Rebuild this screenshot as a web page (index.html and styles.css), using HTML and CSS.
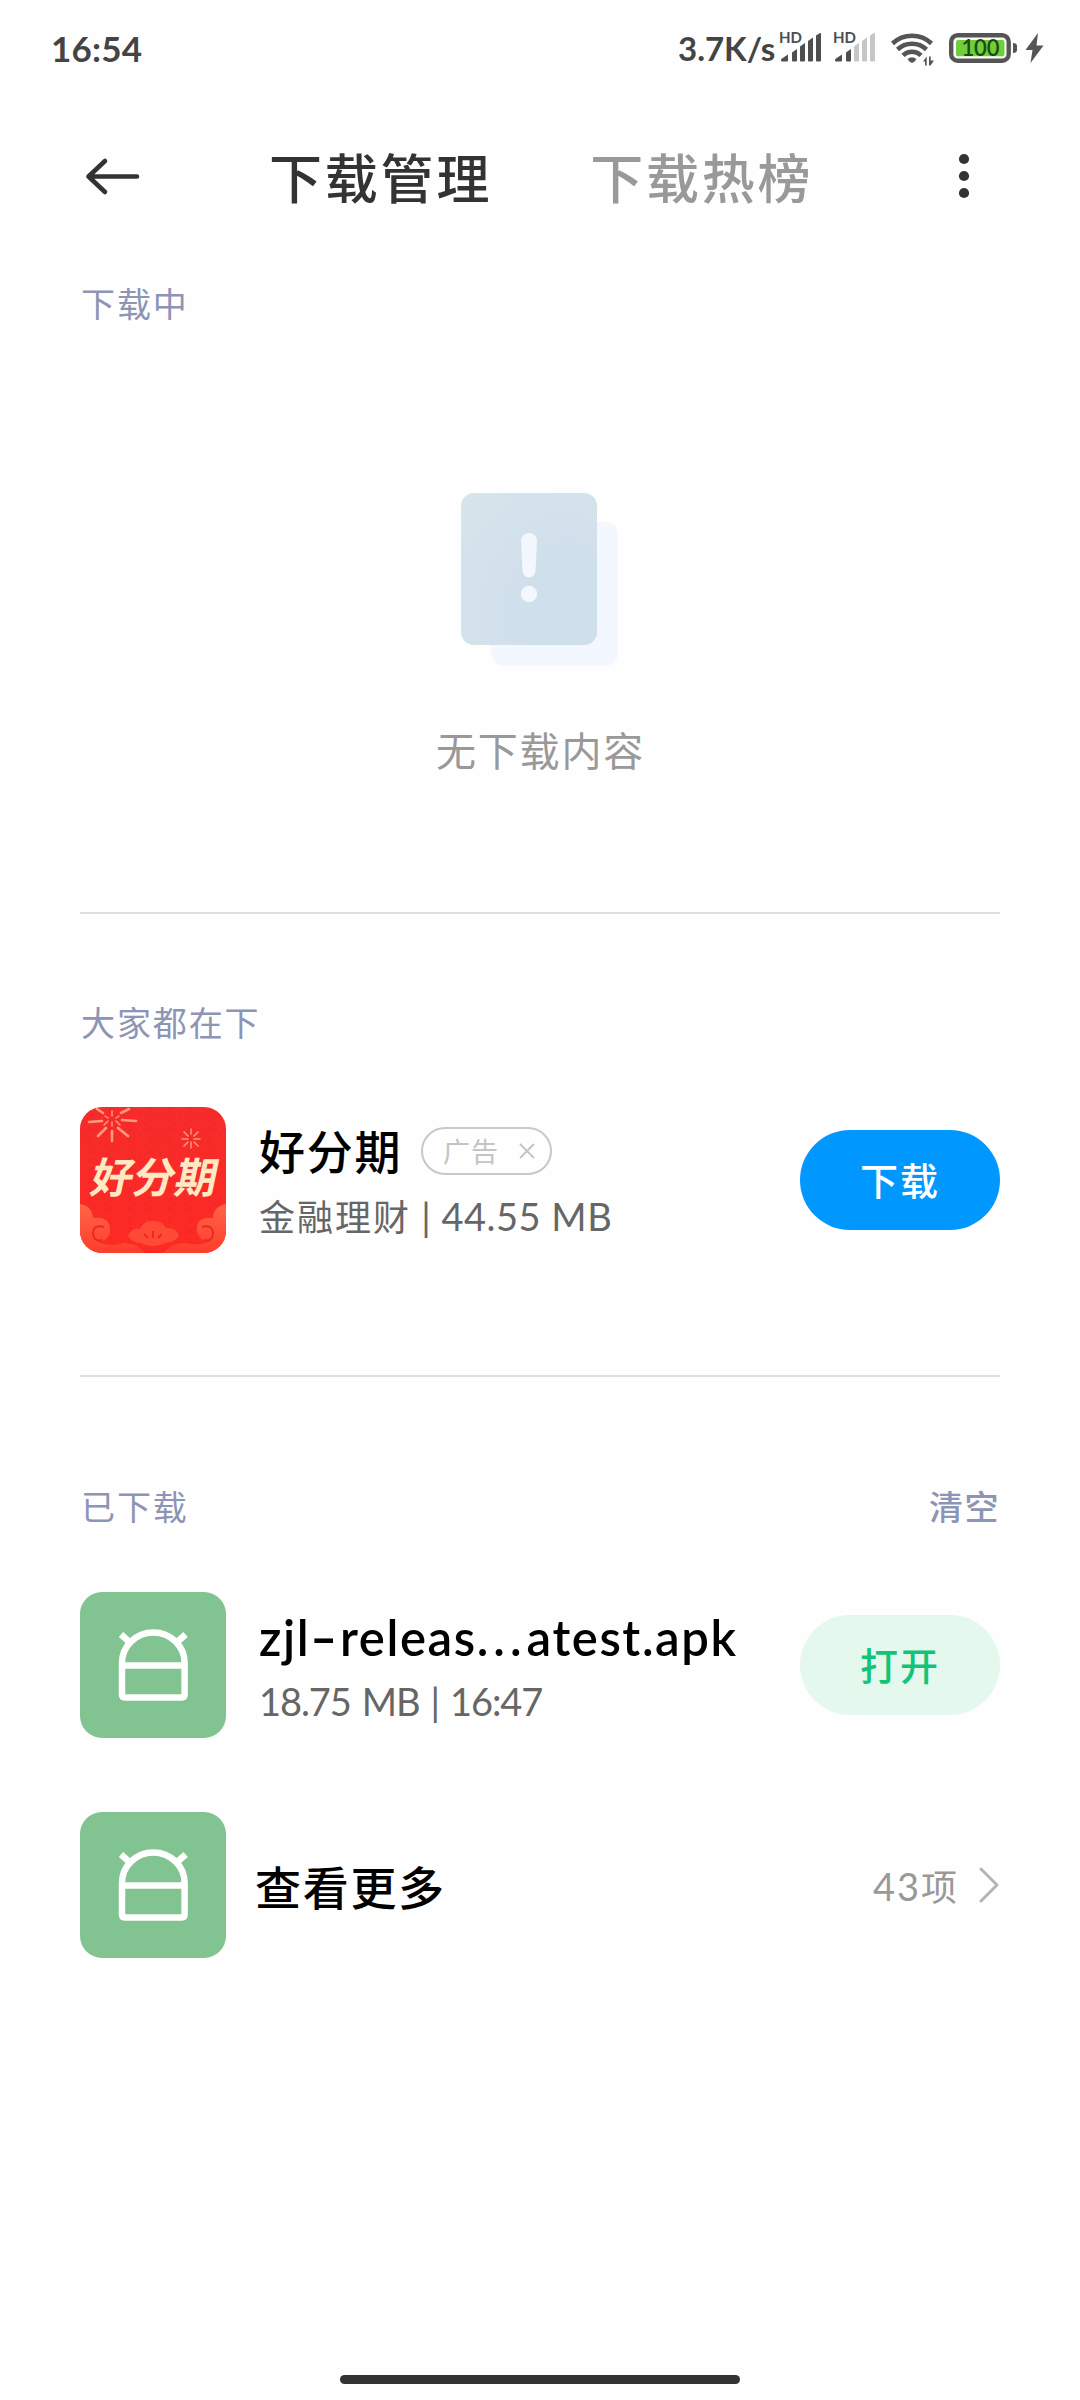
FILE: index.html
```html
<!DOCTYPE html>
<html lang="zh-CN">
<head>
<meta charset="utf-8">
<title>下载管理</title>
<link rel="stylesheet" href="styles.css">
</head>
<body>
<svg class="defs" aria-hidden="true">
  <symbol id="android" viewBox="0 0 146 146">
    <g fill="none" stroke="#fff" stroke-width="6.500" stroke-linejoin="round">
      <path d="M42 71a31.300 30.500 0 0 1 62.600 0V102.500q0 3-3 3H45q-3 0-3-3Z"/>
      <path d="M42 73.500H104.600M41 42.500l9 8M105.600 42.500l-9 8"/>
    </g>
  </symbol>
</svg>
<main class="screen">
  <header class="status">
    <span class="clock">16:54</span>
    <span class="speed">3.7K/s</span>
    <svg class="indicators" width="270" height="40" viewBox="776 28 270 40">
      <g fill="#4e4e4e">
        <text x="779" y="43" class="hd" textLength="23" lengthAdjust="spacingAndGlyphs">HD</text>
        <text x="833" y="43" class="hd" textLength="23" lengthAdjust="spacingAndGlyphs">HD</text>
        <path id="b1" d="M781 60q0-1 1-1.500l6-4V60.500q0 1-1 1h-5q-1 0-1-1Z"/>
        <path id="b2" d="M792 52.500l5-3.500v11.500q0 1-1 1h-3q-1 0-1-1Z"/>
        <path d="M800 46.500l5-3.500v17.500q0 1-1 1h-3q-1 0-1-1ZM808 41l5-3.500v23q0 1-1 1h-3q-1 0-1-1ZM816 35.500l4-2.500q1 0 1 1v26.500q0 1-1 1h-3q-1 0-1-1Z"/>
        <use href="#b1" x="54"/><use href="#b2" x="54"/>
      </g>
      <path fill="#c6c6c6" d="M854 46.500l5-3.500v17.500q0 1-1 1h-3q-1 0-1-1ZM862 41l5-3.500v23q0 1-1 1h-3q-1 0-1-1ZM870 35.500l4-2.500q1 0 1 1v26.500q0 1-1 1h-3q-1 0-1-1Z"/>
      <g fill="none" stroke="#555" stroke-width="4.600">
        <path d="M892.500 43.500a28.500 28.500 0 0 1 39 0M897.500 49.500a21 21 0 0 1 29 0M903 55.300a13 13 0 0 1 18 0"/>
      </g>
      <path fill="#555" d="M907.500 59.300q4.500-4 9 0l-2.500 2.700q-2 1.500-4 0Z"/>
      <path fill="#555" d="M923 61.500l3.700-5v9h-1.700v-4ZM929 56.500h1.700v4h3.300l-3.500 5h-1.500Z"/>
      <rect x="951.200" y="35.200" width="57.500" height="25.500" rx="6.500" fill="none" stroke="#555" stroke-width="4.400"/>
      <rect x="956" y="40" width="48.500" height="16.300" rx="2" fill="#6fce3a"/>
      <text x="961.500" y="56" class="charge" textLength="38">100</text>
      <path fill="#555" d="M1013 43q4 0 4 3v4q0 3-4 3ZM1038 33l-12.500 17h7l-2 13 13-17.500h-7Z"/>
    </svg>
  </header>

  <nav class="topbar">
    <svg class="back" width="56" height="44" viewBox="84 154 56 44" fill="none" stroke="#333" stroke-width="4.600" stroke-linecap="round" stroke-linejoin="round"><path d="M137 176.500H88.500M105 161L88.500 176.500L105 192"/></svg>
    <span class="tab tab-active">下载管理</span>
    <span class="tab">下载热榜</span>
    <svg class="more" width="12" height="48" viewBox="0 0 12 48" fill="#333"><circle cx="6" cy="7" r="5.100"/><circle cx="6" cy="24" r="5.100"/><circle cx="6" cy="41" r="5.100"/></svg>
  </nav>

  <section class="downloading">
    <h2 class="label">下载中</h2>
    <svg class="empty-art" width="158" height="174" viewBox="0 0 158 174">
      <defs>
        <radialGradient id="sheet" cx=".78" cy=".78" r="1"><stop offset=".35" stop-color="#cfdfec"/><stop offset="1" stop-color="#d8e4eb"/></radialGradient>
      </defs>
      <rect x="31" y="29" width="127" height="144" rx="13" fill="#f2f8fe"/>
      <rect x="1" y="0" width="136" height="152" rx="13" fill="url(#sheet)"/>
      <path fill="#f2f8fd" d="M61 48a8 8 0 0 1 16 0l-1.500 30a6.500 6.500 0 0 1-13 0Z"/>
      <circle cx="69" cy="101" r="8.200" fill="#f2f8fd"/>
    </svg>
    <p class="empty-text">无下载内容</p>
  </section>

  <section class="popular">
    <h2 class="label">大家都在下</h2>
    <div class="item">
      <svg class="icon" width="146" height="146" viewBox="0 0 146 146">
        <defs>
          <linearGradient id="red" x2="0" y2="1"><stop stop-color="#f72c2b"/><stop offset="1" stop-color="#ff2a24"/></linearGradient>
          <linearGradient id="cloud" x2="0" y2="1"><stop stop-color="#ff6548"/><stop offset="1" stop-color="#ff3d2c"/></linearGradient>
          <pattern id="waves" width="20" height="10" patternUnits="userSpaceOnUse"><path d="M0 10a10 9 0 0 1 20 0M4 10a6 5 0 0 1 12 0M-10 5a10 9 0 0 1 20 0M10 5a10 9 0 0 1 20 0" fill="none" stroke="#d91f22" stroke-width=".8" opacity=".3"/></pattern>
        </defs>
        <rect width="146" height="146" fill="url(#red)"/>
        <rect width="146" height="146" fill="url(#waves)"/>
        <g stroke="#ff9b78" stroke-width="2.600" stroke-linecap="round" fill="none">
          <path d="M32 24v10M26 21l-8 8M38 21l10 8M22 14l-13 1M42 13l14 1M23 6l-6-4M41 6l8-4" />
          <path stroke-width="1.500" d="M28 14l-4 4M36 14l4 4M32 4v5M25 9l3 2M39 9l-3 2M32 15v4"/>
          <path stroke-width="1.500" d="M111 22v5M111 35v6M102 32h6M114 32h6M104 25l4 4M118 25l-4 4M104 39l4-4M118 39l-4-4"/>
        </g>
        <path fill="url(#cloud)" d="M0 97q12 2 13 14q18-2 17 14q-2 11-14 9q14 7 28 2q14 0 20 10H0ZM146 97q-12 2-13 14q-18-2-16 14q3 10 14 9q-14 6-26 2q-14 0-21 10h62Z"/>
        <path fill="#ff4a35" d="M48 129q4-9 12-7q4-9 13-8q9-1 13 7q10-1 13 8q-5 7-14 7q-5 3-12 3t-12-3q-9 0-13-7Z"/>
        <path d="M24 120q-11-3-11 7q1 8 9 6M122 120q11-3 11 7q-1 8-9 6M64 127l4 4M73 124v7M82 127l-4 4" fill="none" stroke="#e82a22" stroke-width="2"/>
        <text class="brand" x="27" y="86" textLength="126" transform="skewX(-12)">好分期</text>
      </svg>
      <div class="info">
        <div class="name-row"><h3 class="name">好分期</h3>
          <span class="ad">广告<svg width="16" height="16" viewBox="0 0 16 16" stroke="#c4c4c4" stroke-width="1.800"><path d="M1 1l14 14M15 1L1 15"/></svg></span>
        </div>
        <p class="meta"><span class="han">金融理财</span> | 44.55 MB</p>
      </div>
      <button class="btn btn-primary">下载</button>
    </div>
  </section>

  <section class="downloaded">
    <div class="section-head"><h2 class="label">已下载</h2><span class="label clear">清空</span></div>
    <div class="item">
      <svg class="icon apk" width="146" height="146"><use href="#android"/></svg>
      <div class="info">
        <div class="name-row"><h3 class="name latin">zjl<span class="hyphen">-</span>releas<span class="dots">...</span>atest.apk</h3></div>
        <p class="meta meta-file">18.75 MB | 16:47</p>
      </div>
      <button class="btn btn-open">打开</button>
    </div>
    <div class="item more-row">
      <svg class="icon apk" width="146" height="146"><use href="#android"/></svg>
      <span class="name see-all">查看更多</span>
      <span class="count">43<span class="han">项</span></span>
      <svg class="chevron" width="22" height="38" viewBox="0 0 22 38" fill="none" stroke="#b5b5b5" stroke-width="3" stroke-linecap="round" stroke-linejoin="round"><path d="M3 3l16 16L3 35"/></svg>
    </div>
  </section>
  <div class="home-bar"></div>
</main>
</body>
</html>
```
FILE: styles.css
```css
* { box-sizing: border-box; margin: 0; padding: 0; }
body { background: #fefefe; font-family: Lato, "Noto Sans CJK SC", sans-serif; }
.defs { position: absolute; width: 0; height: 0; }
.screen { width: 1080px; height: 2400px; display: flex; flex-direction: column; overflow: hidden; white-space: nowrap; }

.status { height: 96px; flex: none; display: flex; align-items: flex-start; padding: 28px 0 0 51px; color: #444; font-size: 35px; line-height: 41px; font-weight: 700; }
.clock { width: 627px; letter-spacing: .2px; }
.speed { width: 98px; font-size: 33px; letter-spacing: 0; }
.hd { font-size: 16px; font-weight: 700; }
.charge { font-size: 22px; font-weight: 600; fill: #1d4a12; }

.topbar { height: 160px; flex: none; display: flex; align-items: center; padding-left: 84px; }
.tab { font-size: 53px; line-height: 80px; letter-spacing: 2.800px; font-weight: 500; color: #999; margin-left: 98px; padding-top: 5px; }
.tab-active { color: #333; margin-left: 129px; }
.more { margin-left: 145px; }

.label { font-size: 34px; line-height: 40px; letter-spacing: 1.900px; font-weight: 400; color: #8d95b4; }
.downloading { height: 658px; flex: none; margin: 0 80px; padding: 28px 0 0 1px; border-bottom: 2px solid #dedede; display: flex; flex-direction: column; }
.empty-art { margin: 169px 0 0 379px; }
.empty-text { margin-top: 59px; text-align: center; font-size: 40px; line-height: 50px; letter-spacing: 1.800px; color: #999; }

.popular { height: 463px; flex: none; margin: 0 80px; padding-top: 89px; border-bottom: 2px solid #dedede; }
.popular .label { padding-left: 1px; }
.item { display: flex; align-items: center; height: 146px; margin-top: 64px; }
.icon { border-radius: 22px; flex: none; }
.apk { background: #82c491; }
.brand { font-size: 42px; font-weight: 700; fill: #ffe8c4; }
.info { margin-left: 33px; padding-top: 6px; flex: 1; }
.name-row { display: flex; align-items: center; height: 58px; }
.name { font-size: 46px; line-height: 58px; letter-spacing: 1.700px; font-weight: 500; color: #000; }
.ad { width: 131px; height: 48px; margin: 0 0 2px 19px; border: 2px solid #c8c8c8; border-radius: 24px; display: flex; align-items: center; justify-content: space-between; padding: 0 15px 0 20px; font-size: 27px; letter-spacing: 1px; color: #c4c4c4; }
.meta { margin-top: 8px; font-size: 38px; line-height: 54px; letter-spacing: .5px; color: #666; }
.meta-file { letter-spacing: -1.100px; word-spacing: 2.500px; }
.han { font-size: 36px; letter-spacing: 2px; }
.btn { width: 200px; height: 100px; border: 0; border-radius: 50px; font: 500 38px/100px Lato, "Noto Sans CJK SC", sans-serif; letter-spacing: 2px; }
.btn-primary { background: #0098ff; color: #fff; }
.btn-open { background: #e4f8ee; color: #13c478; }

.downloaded { margin: 0 80px; padding-top: 110px; }
.downloaded .item { margin-top: 65px; }
.section-head { display: flex; justify-content: space-between; padding-left: 1px; }
.clear { font-weight: 500; letter-spacing: 1.500px; }
.latin { font-size: 49px; font-weight: 600; letter-spacing: 1.600px; }
.hyphen { display: inline-block; margin: 0 5px; transform: scaleX(1.5); }
.dots { letter-spacing: 5px; }
.downloaded .more-row { margin-top: 74px; }
.see-all { margin-left: 29px; padding-top: 5px; flex: 1; }
.count { font-size: 38px; letter-spacing: 2px; color: #999; margin-right: 21px; }
.count .han { letter-spacing: 0; }
.home-bar { width: 400px; height: 9px; border-radius: 5px; background: #333; margin: auto auto 16px; }
```
